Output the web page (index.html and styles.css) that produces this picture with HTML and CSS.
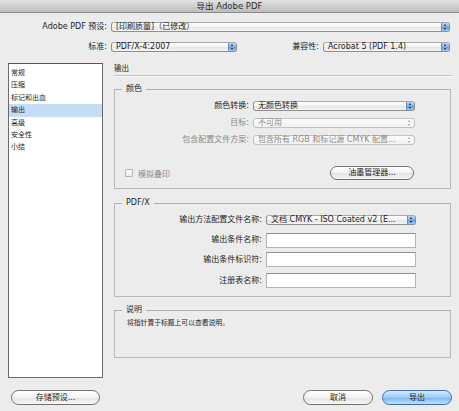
FILE: index.html
```html
<!DOCTYPE html>
<html lang="zh-CN">
<head>
<meta charset="utf-8">
<title>导出 Adobe PDF</title>
<link rel="stylesheet" href="styles.css">
</head>
<body>
<div class="titlebar">导出 Adobe PDF</div>

<div class="top">
  <label class="lbl">Adobe PDF 预设:</label>
  <div class="popup span3"><span class="val">[印刷质量]（已修改）</span><span class="stepper"></span></div>
  <label class="lbl">标准:</label>
  <div class="popup"><span class="val">PDF/X-4:2007</span><span class="stepper"></span></div>
  <label class="lbl">兼容性:</label>
  <div class="popup"><span class="val">Acrobat 5 (PDF 1.4)</span><span class="stepper"></span></div>
</div>

<div class="main">
  <ul class="nav">
    <li>常规</li>
    <li>压缩</li>
    <li>标记和出血</li>
    <li class="sel">输出</li>
    <li>高级</li>
    <li>安全性</li>
    <li>小结</li>
  </ul>

  <div class="panel">
    <div class="panel-title">输出</div>

    <fieldset class="group g-color">
      <legend>颜色</legend>
      <div class="form f1">
        <label class="lbl">颜色转换:</label>
        <div class="popup"><span class="val">无颜色转换</span><span class="stepper"></span></div>
        <label class="lbl dim">目标:</label>
        <div class="popup disabled"><span class="val">不可用</span><span class="stepper"></span></div>
        <label class="lbl dim">包含配置文件方案:</label>
        <div class="popup disabled"><span class="val">包含所有 RGB 和标记源 CMYK 配置...</span><span class="stepper"></span></div>
      </div>
      <div class="group-foot">
        <label class="check dim"><span class="box"></span>模拟叠印</label>
        <button class="btn ink">油墨管理器...</button>
      </div>
    </fieldset>

    <fieldset class="group g-pdfx">
      <legend>PDF/X</legend>
      <div class="form f2">
        <label class="lbl">输出方法配置文件名称:</label>
        <div class="popup"><span class="val">文档 CMYK - ISO Coated v2 (E...</span><span class="stepper"></span></div>
        <label class="lbl">输出条件名称:</label>
        <div class="field"></div>
        <label class="lbl">输出条件标识符:</label>
        <div class="field"></div>
        <label class="lbl">注册表名称:</label>
        <div class="field"></div>
      </div>
    </fieldset>

    <fieldset class="group g-desc">
      <legend>说明</legend>
      <p class="desc">将指针置于标题上可以查看说明。</p>
    </fieldset>
  </div>
</div>

<div class="footer">
  <button class="btn save">存储预设...</button>
  <div class="actions">
    <button class="btn cancel">取消</button>
    <button class="btn primary">导出</button>
  </div>
</div>
</body>
</html>
```

FILE: styles.css
```css
* { box-sizing: border-box; }
html, body { margin: 0; padding: 0; }
body {
  width: 459px;
  height: 411px;
  overflow: hidden;
  background: #ececec;
  font-family: "DejaVu Sans", "Noto Sans CJK SC", sans-serif;
  font-size: 8px;
  color: #1e1e1e;
}

.titlebar {
  height: 13px;
  background: linear-gradient(#e2e2e2, #bdbdbd);
  border-bottom: 1px solid #8a8a8a;
  text-align: center;
  font-size: 8.5px;
  line-height: 12px;
  color: #2b2b2b;
}

/* top preset rows */
.top {
  display: grid;
  grid-template-columns: 111px 126px 86px 127px;
  grid-template-rows: 10px 10px;
  row-gap: 10px;
  padding-top: 9px;
  align-items: center;
}
.span3 { grid-column: 2 / span 3; }

.lbl {
  text-align: right;
  padding-right: 4px;
  white-space: nowrap;
  line-height: 10px;
}
.dim { color: #8a8a8a; }

/* popup menus */
.popup {
  position: relative;
  height: 10px;
  border: 1px solid #8f8f8f;
  border-top-color: #a9a9a9;
  border-radius: 3px;
  background: linear-gradient(#ffffff, #f1f1f1 50%, #e4e4e4 51%, #f6f6f6);
  line-height: 8px;
  padding-left: 4px;
  white-space: nowrap;
}
.popup .val { display: block; padding-right: 10px; }
.stepper {
  position: absolute;
  right: 0;
  top: 0;
  bottom: 0;
  width: 8px;
  border-left: 1px solid #6f8fb5;
  border-radius: 0 2px 2px 0;
  background: linear-gradient(#b8d6f6, #7eb2ea 50%, #5d9be3 51%, #9fcaf6);
}
.stepper::before, .stepper::after {
  content: "";
  position: absolute;
  left: 2px;
  border-left: 1.5px solid transparent;
  border-right: 1.5px solid transparent;
}
.stepper::before { top: 1px; border-bottom: 2px solid #1b1b1b; }
.stepper::after { bottom: 1px; border-top: 2px solid #1b1b1b; }

.popup.disabled {
  border-color: #c3c3c3;
  background: linear-gradient(#fbfbfb, #f1f1f1);
  color: #8a8a8a;
}
.popup.disabled .stepper {
  border-left: none;
  background: none;
}
.popup.disabled .stepper::before { border-bottom-color: #9a9a9a; }
.popup.disabled .stepper::after { border-top-color: #9a9a9a; }

/* main area */
.main {
  display: flex;
  gap: 11px;
  padding: 0 8px;
  margin-top: 11px;
  height: 315px;
}

.nav {
  list-style: none;
  margin: 0;
  padding: 3px 0 0 0;
  width: 95px;
  flex: none;
  background: #ffffff;
  border: 1px solid #6a6a6a;
  border-top-color: #555;
  font-size: 7px;
}
.nav li {
  height: 12.4px;
  line-height: 12.4px;
  padding-left: 2px;
}
.nav li.sel { background: #c5dcf5; }

.panel {
  flex: 1;
  display: flex;
  flex-direction: column;
  width: 337px;
}
.panel-title {
  font-size: 7.5px;
  height: 13px;
  line-height: 12px;
  border-bottom: 1px solid #c2c2c2;
  box-shadow: 0 1px 0 #f9f9f9;
  margin-right: -1px;
}

.group {
  margin: 0;
  padding: 0;
  border: 1px solid #b9b9b9;
  border-top-color: #b0b0b0;
  min-width: 0;
}
.group legend {
  margin-left: 7px;
  padding: 0 4px;
  line-height: 10px;
  height: 10px;
  color: #262626;
}

.g-color { margin-top: 8px; padding: 7px 0 8px; }
.g-pdfx { margin-top: 9px; padding: 7px 0 8px; }
.g-desc { margin-top: 8px; height: 53px; }

.form {
  display: grid;
  align-items: center;
}
.f1 {
  grid-template-columns: 134px 162px;
  grid-auto-rows: 10px;
  row-gap: 7px;
  column-gap: 4px;
}
.f1 .lbl, .f2 .lbl { padding-right: 0; }
.f2 {
  grid-template-columns: 147px 150px;
  grid-template-rows: 10px 15px 15px 15px;
  column-gap: 4px;
  row-gap: 6px;
}
.f2 > :nth-child(3), .f2 > :nth-child(4) { margin-top: 3px; }

.field {
  height: 15px;
  background: #fff;
  border: 1px solid #b4b4b4;
  border-top-color: #8e8e8e;
}

.group-foot {
  display: flex;
  align-items: center;
  justify-content: space-between;
  margin-top: 21px;
  padding: 0 36px 0 10px;
}
.check {
  display: flex;
  align-items: center;
  gap: 5px;
}
.box {
  width: 8px;
  height: 8px;
  border: 1px solid #b5b5b5;
  border-radius: 1px;
  background: linear-gradient(#fdfdfd, #ececec);
}

.btn {
  font: inherit;
  color: #1e1e1e;
  height: 15px;
  padding: 0;
  border: 1px solid #707070;
  border-radius: 8px;
  background: linear-gradient(#ffffff, #f3f3f3 50%, #e2e2e2 51%, #f7f7f7);
  line-height: 13px;
  text-align: center;
}
.ink { width: 84px; height: 14px; line-height: 12px; }

.desc {
  margin: 3px 0 0 12px;
  font-size: 6.8px;
  line-height: 10px;
}

/* footer */
.footer {
  display: flex;
  justify-content: space-between;
  padding: 0 7px 0 11px;
  margin-top: 12px;
}
.save { width: 89px; }
.actions { display: flex; gap: 9px; }
.cancel { width: 70px; }
.primary {
  width: 70px;
  border-color: #3f6fae;
  background: linear-gradient(#d4ebfd, #9ccaf4 50%, #76b5f0 51%, #bfe3fc);
}
```
